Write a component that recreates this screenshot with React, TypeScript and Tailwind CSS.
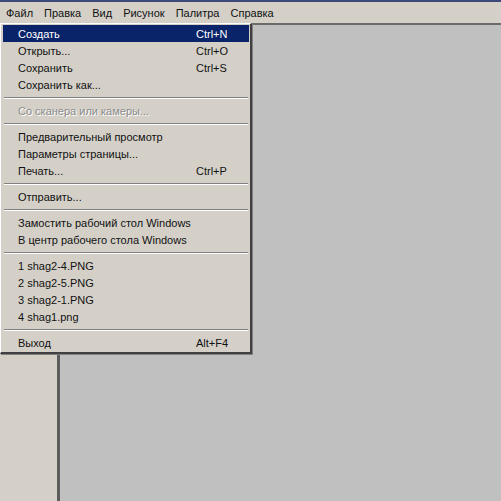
type Item = { label: string; shortcut?: string; active?: boolean; disabled?: boolean } | "sep";

const items: Item[] = [
  { label: "Создать", shortcut: "Ctrl+N", active: true },
  { label: "Открыть...", shortcut: "Ctrl+O" },
  { label: "Сохранить", shortcut: "Ctrl+S" },
  { label: "Сохранить как..." },
  "sep",
  { label: "Со сканера или камеры...", disabled: true },
  "sep",
  { label: "Предварительный просмотр" },
  { label: "Параметры страницы..." },
  { label: "Печать...", shortcut: "Ctrl+P" },
  "sep",
  { label: "Отправить..." },
  "sep",
  { label: "Замостить рабочий стол Windows" },
  { label: "В центр рабочего стола Windows" },
  "sep",
  { label: "1 shag2-4.PNG" },
  { label: "2 shag2-5.PNG" },
  { label: "3 shag2-1.PNG" },
  { label: "4 shag1.png" },
  "sep",
  { label: "Выход", shortcut: "Alt+F4" },
];

const menus = ["Файл", "Правка", "Вид", "Рисунок", "Палитра", "Справка"];

export default function App() {
  return (
    <div className="relative w-[501px] h-[501px] overflow-hidden bg-[#d4d0c8] flex flex-col text-[11px] text-[#111]" style={{ fontFamily: '"Liberation Sans", Arial, sans-serif' }}>
      <div className="h-[2px] bg-[#3b4a78]" />
      <div className="h-[21px] flex items-center pl-[6px] gap-[11px] pt-[1px]">
        {menus.map((m) => (
          <span key={m}>{m}</span>
        ))}
      </div>
      <div className="flex flex-1">
        <div className="w-[57px] bg-[#d4d0c8]" />
        <div className="w-[3px] bg-[#5c5c5c]" />
        <div className="flex-1 bg-[#c0c0c0] border-t-2 border-[#6b6b6b]" />
      </div>

      <div className="absolute left-0 top-[23px] w-[252px] bg-[#d4d0c8] border-l border-t border-white border-r-2 border-b-2 border-r-[#404040] border-b-[#404040] py-[1px] pl-[2px] pr-[1px] shadow-[1px_1px_0_#808080]">
        {items.map((it, i) =>
          it === "sep" ? (
            <div key={i} className="h-[9px] flex flex-col justify-center px-[1px]">
              <div className="h-px bg-[#808080]" />
              <div className="h-px bg-white" />
            </div>
          ) : (
            <div
              key={i}
              className={`h-[17px] flex items-center pl-[15px] pt-[1px] ${it.active ? "bg-[#0a246a] text-white" : ""} ${it.disabled ? "text-[#8c8c8c] [text-shadow:1px_1px_0_#fff]" : ""}`}
            >
              <span className="w-[178px] whitespace-nowrap">{it.label}</span>
              {it.shortcut && <span>{it.shortcut}</span>}
            </div>
          )
        )}
      </div>
    </div>
  );
}
